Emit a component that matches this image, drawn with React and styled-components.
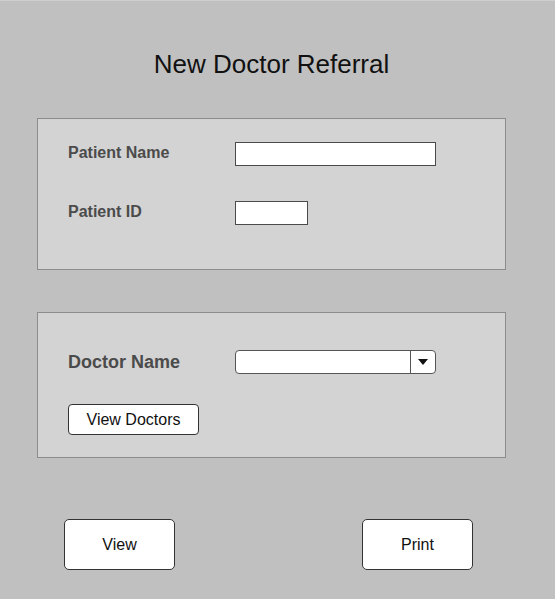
import React from "react";
import styled, { createGlobalStyle } from "styled-components";

const GlobalStyle = createGlobalStyle`
  html, body {
    margin: 0;
    padding: 0;
    background: #c0c0c0;
  }
  * {
    box-sizing: border-box;
  }
`;

const Page = styled.div`
  min-height: 100vh;
  background: #c0c0c0;
  border-top: 1px solid #cfcfcf;
  font-family: "Liberation Sans", Arial, sans-serif;
`;

const Content = styled.div`
  width: 469px;
  margin-left: 37px;
  display: flex;
  flex-direction: column;
`;

const Title = styled.h1`
  margin: 48px 0 39px;
  font-size: 26px;
  line-height: 30px;
  font-weight: normal;
  text-align: center;
  color: #111;
`;

const Panel = styled.div`
  background: #d3d3d3;
  border: 1px solid #8c8c8c;
  padding: ${(p) => p.$padding};
  margin-top: ${(p) => p.$top || "0px"};
  display: flex;
  flex-direction: column;
  gap: ${(p) => p.$gap};
  align-items: flex-start;
`;

const FieldRow = styled.div`
  display: grid;
  grid-template-columns: 167px auto;
  align-items: center;
  width: 100%;
`;

const Label = styled.label`
  font-weight: bold;
  font-size: ${(p) => p.$size || "16px"};
  color: #4b4b4b;
  line-height: 20px;
  margin-top: ${(p) => p.$shift || "-2px"};
`;

const TextInput = styled.input`
  width: ${(p) => p.$width};
  height: 24px;
  border: 1px solid #4a4a4a;
  background: #fff;
  padding: 0 4px;
  font-family: inherit;
  font-size: 14px;
  outline: none;
`;

const SelectBox = styled.div`
  width: 201px;
  height: 24px;
  border: 1px solid #555;
  border-radius: 4px;
  background: #fff;
  display: flex;
`;

const SelectValue = styled.div`
  flex: 1;
`;

const SelectArrow = styled.div`
  width: 25px;
  border-left: 1px solid #555;
  display: flex;
  align-items: center;
  justify-content: center;
`;

const SmallButton = styled.button`
  width: 131px;
  height: 31px;
  border: 1px solid #333;
  border-radius: 4px;
  background: #fff;
  font-family: inherit;
  font-size: 16px;
  color: #111;
  padding: 0;
`;

const Actions = styled.div`
  display: flex;
  justify-content: space-between;
  margin-top: 61px;
  padding: 0 33px 0 27px;
`;

const BigButton = styled.button`
  width: 111px;
  height: 51px;
  border: 1px solid #333;
  border-radius: 5px;
  background: #fff;
  font-family: inherit;
  font-size: 16px;
  color: #111;
  padding: 0;
`;

export default function App() {
  return (
    <Page>
      <GlobalStyle />
      <Content>
        <Title>New Doctor Referral</Title>

        <Panel $padding="23px 30px 44px" $gap="35px">
          <FieldRow>
            <Label>Patient Name</Label>
            <TextInput $width="201px" />
          </FieldRow>
          <FieldRow>
            <Label>Patient ID</Label>
            <TextInput $width="73px" />
          </FieldRow>
        </Panel>

        <Panel $top="42px" $padding="37px 30px 22px" $gap="30px">
          <FieldRow>
            <Label $size="18px" $shift="0px">Doctor Name</Label>
            <SelectBox>
              <SelectValue />
              <SelectArrow>
                <svg width="10" height="6" viewBox="0 0 10 6">
                  <path d="M0 0 H10 L5 6 Z" fill="#111" />
                </svg>
              </SelectArrow>
            </SelectBox>
          </FieldRow>
          <SmallButton>View Doctors</SmallButton>
        </Panel>

        <Actions>
          <BigButton>View</BigButton>
          <BigButton>Print</BigButton>
        </Actions>
      </Content>
    </Page>
  );
}
